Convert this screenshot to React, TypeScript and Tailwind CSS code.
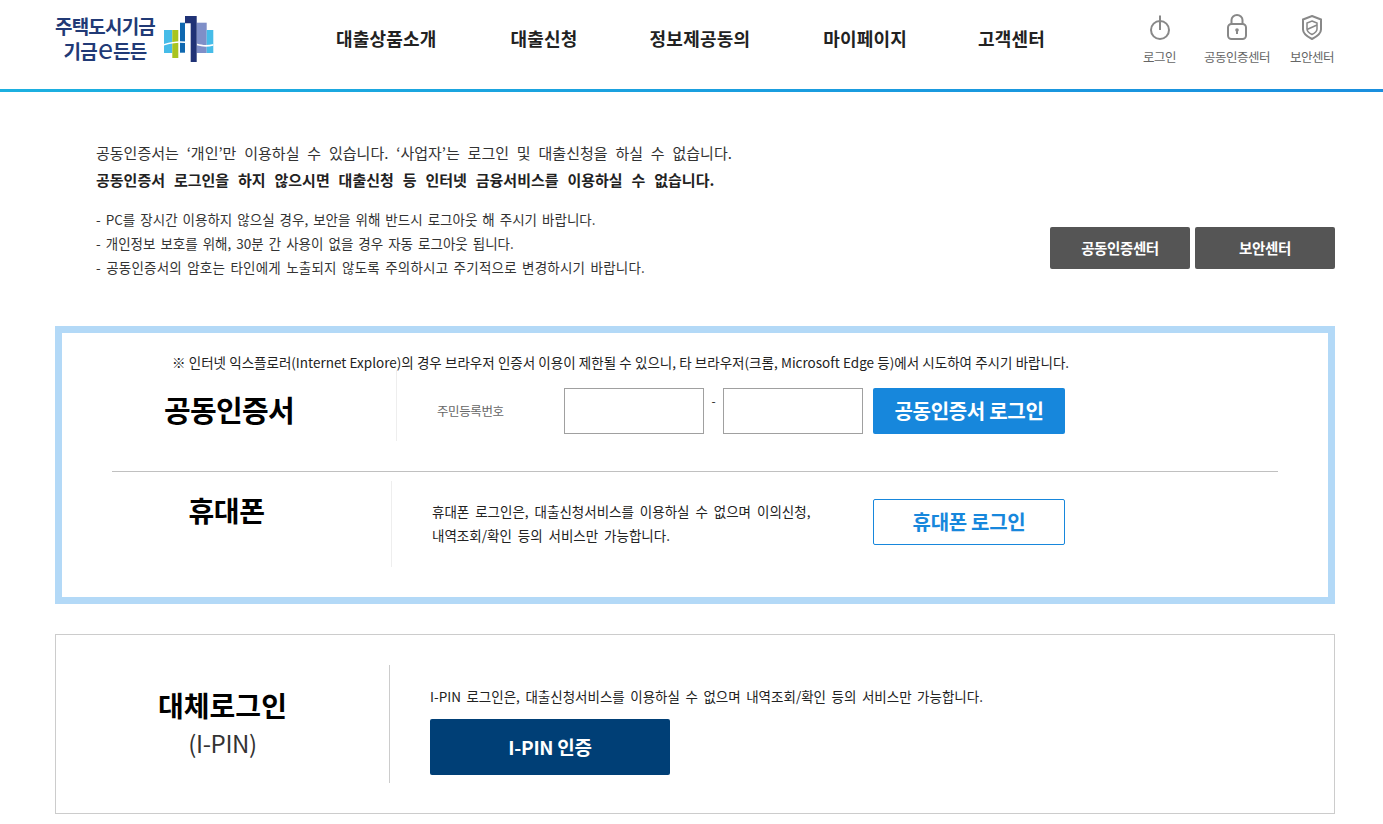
const font = { fontFamily: '"Noto Sans CJK KR", "Noto Sans", sans-serif' }

const menus = [
  { label: '대출상품소개', ml: '' },
  { label: '대출신청', ml: 'ml-[74px]' },
  { label: '정보제공동의', ml: 'ml-[72px]' },
  { label: '마이페이지', ml: 'ml-[73px]' },
  { label: '고객센터', ml: 'ml-[71px]' },
]

function Logo() {
  return (
    <div className="flex items-start">
      <div className="flex flex-col items-center w-[100px] font-bold text-[#213a76] leading-[25px] whitespace-nowrap">
        <span className="text-[19px] tracking-[-0.8px]">주택도시기금</span>
        <span className="text-[19px] tracking-[-0.8px] flex items-baseline h-[25px]">기금<span className="text-[27px] font-normal leading-[14px] mx-[1px]">e</span>든든</span>
      </div>
      <svg width="50" height="46" viewBox="0 0 50 46" className="ml-[9px] mt-[3px]">
        <rect x="0" y="14" width="8.3" height="23" fill="#46bce8" />
        <rect x="8.3" y="14" width="6" height="28" fill="#a9c41f" />
        <rect x="16" y="6.7" width="5" height="30" fill="#0f68b0" />
        <rect x="32.7" y="6.7" width="10" height="30.3" fill="#7f8fc8" />
        <rect x="42.7" y="14" width="6.6" height="23" fill="#46bce8" />
        <path d="M0 28c10-3 18-3.5 26.7-1.5v1.8C18 26 10 26.5 0 29.6zM32.7 27.6c6 1.8 11 2 16.6 .4v1.7c-6 1.6-11 1.3-16.6-.4z" fill="#fff" />
        <path d="M21 0h11.7v46h-6V7.3H21z" fill="#203276" />
      </svg>
    </div>
  )
}

function Util({ label, children, w }: { label: string; children: React.ReactNode; w: string }) {
  return (
    <div className={`flex flex-col items-center ${w}`}>
      <div className="h-[29px] flex items-end justify-center">{children}</div>
      <span className="mt-[8px] text-[12.5px] leading-[17px] tracking-[-0.5px] text-[#666] whitespace-nowrap">{label}</span>
    </div>
  )
}

export default function App() {
  return (
    <div style={font} className="bg-white text-[#222] min-h-screen w-[1383px] overflow-hidden">
      <header>
        <div className="h-[89px] flex items-start px-[55px] pr-[48px]">
          <div className="pt-[13px] w-[281px]"><Logo /></div>
          <nav className="flex pt-[24px] text-[18px] font-bold text-[#222] tracking-[0.2px] leading-[28px]">
            {menus.map(m => (
              <a key={m.label} className={`${m.ml} whitespace-nowrap`}>{m.label}</a>
            ))}
          </nav>
          <div className="ml-auto flex pt-[11px]">
            <Util label="로그인" w="w-[33px] mr-[28px]">
              <svg width="22" height="26" viewBox="0 0 22 26" fill="none" stroke="#888" strokeWidth="2">
                <circle cx="11" cy="16" r="9" />
                <path d="M11 1.5V16" />
              </svg>
            </Util>
            <Util label="공동인증센터" w="w-[66px] mr-[19px]">
              <svg width="20" height="26" viewBox="0 0 20 26" fill="none" stroke="#888" strokeWidth="2">
                <rect x="1" y="10" width="18" height="15" rx="3.5" />
                <path d="M4.5 10V6a5.5 5 0 0 1 11 0v4" />
                <circle cx="10" cy="16" r="1.8" fill="#888" stroke="none" />
                <path d="M10 16v4" />
              </svg>
            </Util>
            <Util label="보안센터" w="w-[46px]">
              <svg width="20" height="25" viewBox="0 0 20 25" fill="none" stroke="#888" strokeWidth="2">
                <path d="M10 1l9 3.5v10c0 4.5-5 7.5-9 9.5-4-2-9-5-9-9.500v-10z" />
                <path d="M10 6l5 2v6c0 2.500-3 4.500-5 5.500-2-1-5-3-5-5.500V8z" strokeWidth="1.5" />
                <path d="M5 14.500l10-4.500" strokeWidth="1.5" />
              </svg>
            </Util>
          </div>
        </div>
        <div className="h-[3px] bg-gradient-to-r from-[#1cb0e0] to-[#1a8fde]" />
      </header>

      <main className="pl-[55px]">
        <div className="w-[1280px]">
          <section className="flex justify-between items-end pl-[41px] pt-[49px]">
            <div className="text-[#333]">
              <p className="text-[15px] leading-[24px] [word-spacing:4.5px]">공동인증서는 ‘개인’만 이용하실 수 있습니다. ‘사업자’는 로그인 및 대출신청을 하실 수 없습니다.</p>
              <p className="text-[15px] leading-[30px] font-bold text-[#222] [word-spacing:5.5px]">공동인증서 로그인을 하지 않으시면 대출신청 등 인터넷 금융서비스를 이용하실 수 없습니다.</p>
              <ul className="mt-[12px] text-[13.5px] leading-[24px] [word-spacing:2px]">
                <li>- PC를 장시간 이용하지 않으실 경우, 보안을 위해 반드시 로그아웃 해 주시기 바랍니다.</li>
                <li>- 개인정보 보호를 위해, 30분 간 사용이 없을 경우 자동 로그아웃 됩니다.</li>
                <li className="tracking-[0.22px]">- 공동인증서의 암호는 타인에게 노출되지 않도록 주의하시고 주기적으로 변경하시기 바랍니다.</li>
              </ul>
            </div>
            <div className="flex gap-[5px] mb-[10px]">
              <button className="w-[140px] h-[42px] rounded-[2px] bg-[#555] text-white text-[14.5px] font-bold tracking-[-0.4px]">공동인증센터</button>
              <button className="w-[140px] h-[42px] rounded-[2px] bg-[#555] text-white text-[14.5px] font-bold tracking-[-0.4px]">보안센터</button>
            </div>
          </section>

          <section className="mt-[47px] h-[278px] border-[7px] border-[#b3d9f7] px-[50px]">
            <p className="pl-[60px] pt-[18px] -mb-[3px] text-[13.5px] leading-[22px] [word-spacing:0.2px] text-[#222] whitespace-nowrap">※ 인터넷 익스플로러(Internet Explore)의 경우 브라우저 인증서 이용이 제한될 수 있으니, 타 브라우저(크롬, Microsoft Edge 등)에서 시도하여 주시기 바랍니다.</p>
            <div className="flex h-[102px] border-b border-[#c0c0c0] pb-[30px]">
              <div className="w-[285px] border-r border-[#eee] flex items-center justify-center pr-[50px] pt-[8px]">
                <h2 className="text-[29px] font-bold text-black tracking-[-0.7px] whitespace-nowrap">공동인증서</h2>
              </div>
              <div className="flex items-start pt-[18px]">
                <span className="ml-[40px] w-[127px] text-[12.5px] leading-[46px] text-[#666] tracking-[-0.4px]">주민등록번호</span>
                <input className="w-[140px] h-[46px] border border-[#a0a0a0] bg-white" />
                <span className="w-[19px] text-center text-[12px] leading-[26px]">-</span>
                <input className="w-[140px] h-[46px] border border-[#a0a0a0] bg-white" />
                <button className="ml-[10px] w-[192px] h-[46px] rounded-[2px] bg-[#1787dc] text-white text-[20px] font-bold tracking-[-0.3px]">공동인증서 로그인</button>
              </div>
            </div>
            <div className="flex pt-[9px]">
              <div className="w-[280px] h-[86px] border-r border-[#eee] flex justify-center pt-[8px] pr-[50px]">
                <h2 className="text-[28px] leading-[42px] font-bold text-black tracking-[-0.5px]">휴대폰</h2>
              </div>
              <div className="flex items-start">
                <p className="ml-[40px] w-[441px] pt-[18px] text-[13.5px] leading-[24px] [word-spacing:2.9px] text-[#222]">휴대폰 로그인은, 대출신청서비스를 이용하실 수 없으며 이의신청,<br />내역조회/확인 등의 서비스만 가능합니다.</p>
                <button className="mt-[18px] w-[192px] h-[46px] rounded-[2px] border border-[#1787dc] text-[#1787dc] text-[20px] font-bold tracking-[-0.3px]">휴대폰 로그인</button>
              </div>
            </div>
          </section>

          <section className="mt-[30px] h-[180px] border border-[#ccc] flex pt-[30px]">
            <div className="w-[334px] h-[118px] border-r border-[#ccc] flex flex-col items-center pt-[20px]">
              <h2 className="text-[28px] leading-[40px] font-bold text-black">대체로그인</h2>
              <span className="text-[24px] leading-[36px] text-[#333] tracking-[-0.4px]">(I-PIN)</span>
            </div>
            <div className="pl-[40px] pt-[21px]">
              <p className="text-[13.5px] leading-[20px] [word-spacing:2.5px] text-[#222]">I-PIN 로그인은, 대출신청서비스를 이용하실 수 없으며 내역조회/확인 등의 서비스만 가능합니다.</p>
              <button className="mt-[13px] block w-[240px] h-[56px] rounded-[2px] bg-[#003f76] text-white text-[19px] font-bold tracking-[-0.3px]">I-PIN 인증</button>
            </div>
          </section>
        </div>
      </main>
    </div>
  )
}
